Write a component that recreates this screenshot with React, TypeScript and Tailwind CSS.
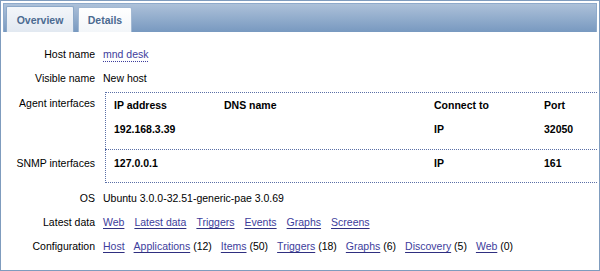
import React from 'react';

const linkCls = 'text-[#3d3d9c] underline decoration-[#2f2f80] underline-offset-[2px]';

function Row({ label, children }: { label: string; children: React.ReactNode }) {
  return (
    <div className="flex h-[24px] items-center">
      <div className="w-[92px] shrink-0 text-right">{label}</div>
      <div className="ml-[8px] flex items-center">{children}</div>
    </div>
  );
}

function Links({ items, gap }: { items: Array<{ name: string; count?: number }>; gap: string }) {
  return (
    <div className={`flex items-center ${gap}`}>
      {items.map(item => (
        <span key={item.name} className="whitespace-nowrap">
          <a href="#" className={linkCls}>{item.name}</a>
          {item.count !== undefined && <span> ({item.count})</span>}
        </span>
      ))}
    </div>
  );
}

export default function App() {
  return (
    <div
      className="h-[271px] w-[600px] border border-[#7f9cbe] bg-white p-[2px] text-[10.5px] leading-[12px] text-black"
      style={{ fontFamily: '"Liberation Sans", Arial, sans-serif' }}
    >
      {/* tabs */}
      <div className="flex h-[29px] items-end gap-[4px] border border-b-0 border-[#8eaacb] bg-gradient-to-b from-[#adc1d9] to-[#7899c0] pl-[2px]">
        <div className="flex h-[26px] w-[68px] items-center justify-center rounded-t-[2px] border border-b-0 border-[#8ca8c8] bg-gradient-to-b from-[#f3f6fa] to-[#e2e9f1] font-bold text-[#4b6a90]">
          Overview
        </div>
        <div className="flex h-[25px] w-[54px] items-center justify-center rounded-t-[2px] border border-b-0 border-[#a3b9d3] bg-gradient-to-b from-white to-[#f3f6f9] font-bold text-[#4b6a90]">
          Details
        </div>
      </div>

      <div className="pt-[10px]">
        <Row label="Host name">
          <a href="#" className="text-[#3d3d9c] underline decoration-dotted decoration-[#3d3d9c] underline-offset-[3px]">mnd desk</a>
        </Row>
        <Row label="Visible name">New host</Row>

        {/* agent interfaces */}
        <div className="flex">
          <div className="w-[92px] shrink-0 pt-[7px] text-right">Agent interfaces</div>
          <div className="ml-[10px] mt-[2px] flex-1 border-l border-t border-dotted border-[#5a6fa6] pb-[8px] pl-[8px] font-bold">
            <div className="grid h-[24px] grid-cols-[110px_210px_110px_1fr] items-center">
              <span>IP address</span>
              <span>DNS name</span>
              <span>Connect to</span>
              <span>Port</span>
            </div>
            <div className="grid h-[24px] grid-cols-[110px_210px_110px_1fr] items-center">
              <span>192.168.3.39</span>
              <span></span>
              <span>IP</span>
              <span>32050</span>
            </div>
          </div>
        </div>

        {/* snmp interfaces */}
        <div className="flex">
          <div className="w-[92px] shrink-0 pt-[8px] text-right">SNMP interfaces</div>
          <div className="ml-[10px] flex-1 border-b border-l border-t border-dotted border-[#5a6fa6] pb-[7px] pl-[8px] pt-[1px] font-bold">
            <div className="grid h-[24px] grid-cols-[110px_210px_110px_1fr] items-center">
              <span>127.0.0.1</span>
              <span></span>
              <span>IP</span>
              <span>161</span>
            </div>
          </div>
        </div>

        <div className="pt-[3px]">
          <Row label="OS">Ubuntu 3.0.0-32.51-generic-pae 3.0.69</Row>
          <Row label="Latest data">
            <Links
              gap="gap-[10px]"
              items={[
                { name: 'Web' },
                { name: 'Latest data' },
                { name: 'Triggers' },
                { name: 'Events' },
                { name: 'Graphs' },
                { name: 'Screens' },
              ]}
            />
          </Row>
          <Row label="Configuration">
            <Links
              gap="gap-[9px]"
              items={[
                { name: 'Host' },
                { name: 'Applications', count: 12 },
                { name: 'Items', count: 50 },
                { name: 'Triggers', count: 18 },
                { name: 'Graphs', count: 6 },
                { name: 'Discovery', count: 5 },
                { name: 'Web', count: 0 },
              ]}
            />
          </Row>
        </div>
      </div>
    </div>
  );
}
